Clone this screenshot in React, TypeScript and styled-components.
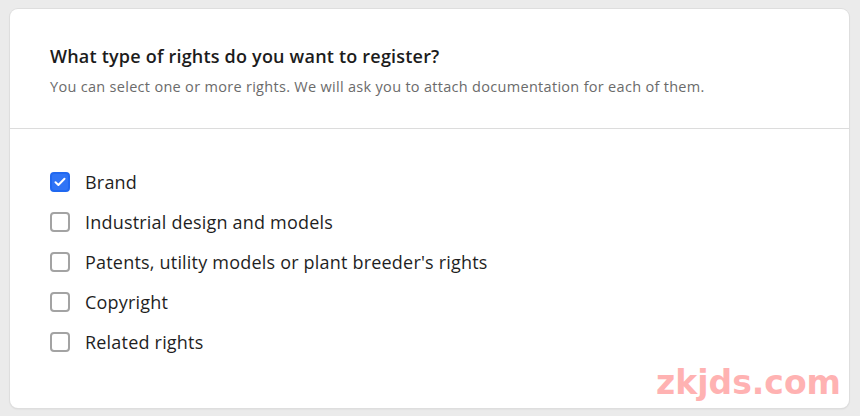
import styled, { createGlobalStyle } from 'styled-components';

const GlobalStyle = createGlobalStyle`
  html, body {
    margin: 0;
    padding: 0;
    background: #ebebeb;
    font-family: "Open Sans", "Noto Sans", sans-serif;
  }
`

const Page = styled.div`
  padding: 9px 11px 8px 10px;
  box-sizing: border-box;
  height: 416px;
`

const Card = styled.section`
  position: relative;
  height: 399px;
  background: #fff;
  border-radius: 8px;
  box-shadow: 0 0 0 1px #dedede, 0 1px 2px rgba(0, 0, 0, 0.12);
  overflow: hidden;
`

const Header = styled.header`
  padding: 36px 40px 0;
  height: 120px;
  box-sizing: border-box;
  border-bottom: 1px solid #dcdcdc;
`

const Title = styled.h2`
  margin: 0;
  font-size: 18px;
  font-weight: 600;
  letter-spacing: 0.2px;
  line-height: 22px;
  color: #1c1c1c;
`

const Subtitle = styled.p`
  margin: 10px 0 0;
  font-size: 14.5px;
  letter-spacing: 0.3px;
  line-height: 20px;
  color: #6b6b6b;
`

const Options = styled.ul`
  list-style: none;
  margin: 0;
  padding: 33px 40px 0;
  display: flex;
  flex-direction: column;
`

const Option = styled.li`
  display: flex;
  align-items: center;
  gap: 15px;
  height: 40px;
  cursor: pointer;
`

const Box = styled.span<{ $checked?: boolean }>`
  width: 20px;
  height: 20px;
  box-sizing: border-box;
  border-radius: 4px;
  border: 2px solid ${({ $checked }) => ($checked ? '#2068f0' : '#a3a3a3')};
  background: ${({ $checked }) => ($checked ? '#2f74f6' : '#fff')};
  display: flex;
  align-items: center;
  justify-content: center;
  flex-shrink: 0;
`

const Label = styled.span`
  font-size: 18px;
  letter-spacing: 0.2px;
  color: #1f1f1f;
`

const Watermark = styled.div`
  position: absolute;
  right: 8px;
  bottom: 6px;
  font-family: "DejaVu Sans", sans-serif;
  font-weight: 700;
  font-size: 33px;
  color: #ffb2b2;
  pointer-events: none;
`

const rights = [
  { label: 'Brand', checked: true },
  { label: 'Industrial design and models', checked: false },
  { label: "Patents, utility models or plant breeder's rights", checked: false },
  { label: 'Copyright', checked: false },
  { label: 'Related rights', checked: false },
]

export default function App() {
  return (
    <Page>
      <GlobalStyle />
      <Card>
        <Header>
          <Title>What type of rights do you want to register?</Title>
          <Subtitle>
            You can select one or more rights. We will ask you to attach documentation for each of them.
          </Subtitle>
        </Header>
        <Options>
          {rights.map((r) => (
            <Option key={r.label}>
              <Box $checked={r.checked}>
                {r.checked && (
                  <svg width="12" height="10" viewBox="0 0 12 10" fill="none">
                    <path d="M1.5 5.2 4.4 8 10.5 1.8" stroke="#fff" strokeWidth="2" strokeLinecap="round" strokeLinejoin="round" />
                  </svg>
                )}
              </Box>
              <Label>{r.label}</Label>
            </Option>
          ))}
        </Options>
        <Watermark>zkjds.com</Watermark>
      </Card>
    </Page>
  )
}
